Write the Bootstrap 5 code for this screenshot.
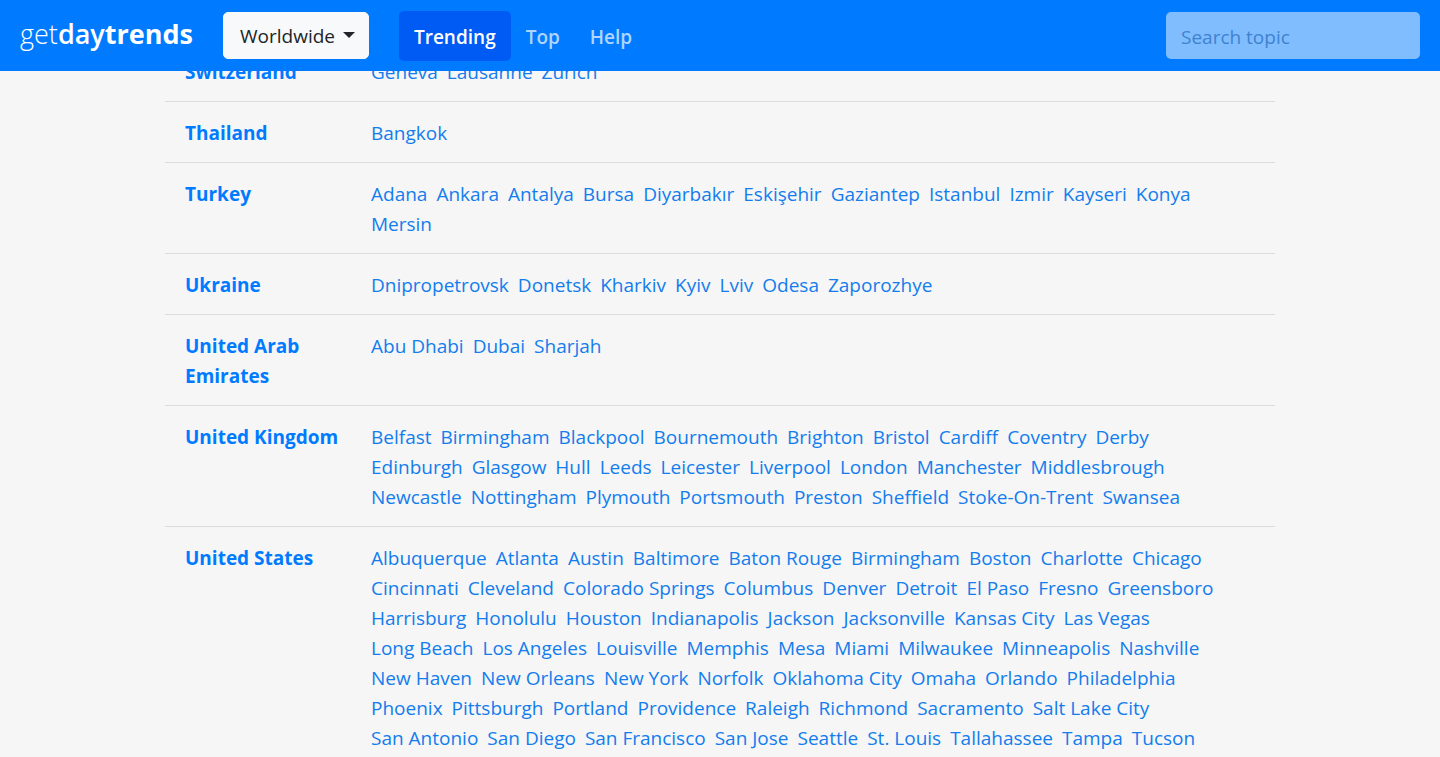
<!DOCTYPE html>
<html lang="en">
<head>
<meta charset="utf-8">
<meta name="viewport" content="width=device-width, initial-scale=1">
<title>getdaytrends</title>
<link href="https://cdn.jsdelivr.net/npm/bootstrap@5.3.0/dist/css/bootstrap.min.css" rel="stylesheet">
<style>
  body { font: 400 19px/30px "Segoe UI", "Open Sans", "Noto Sans", sans-serif; background: #f6f6f6; }
  .topbar { background: #007bff; min-height: 71px; padding: 10px 20px; }
  .topbar .navbar-brand { font-size: 27px; line-height: 44px; padding: 0 0 3px; margin-right: 30px; color: #fff; }
  .brand-thin { font-weight: 300; }
  .brand-mid { font-weight: 600; }
  .brand-strong { font-weight: 700; }
  .region-btn { font-size: 19px; line-height: 30px; height: 47px; padding: 8px 13px 7px 16px; border-color: #f8f9fa; background: #f8f9fa; border-radius: 5px; font-weight: 500; color: #212529; }
  .region-btn::after { margin-left: 8px; border-width: 6px 6px 0; vertical-align: 5px; }
  .region-nav { margin-left: 30px; }
  .topbar .region-nav .nav-link { font-weight: 600; padding: 11px 15px 9px; border-radius: 5px; color: rgba(255,255,255,.7); }
  .topbar .region-nav .nav-link.active { background: #005bf5; color: #fff; }
  .topic-box { width: 254px; height: 47px; font-size: 19px; padding: 8px 15px 5px; border: 0; border-radius: 5px; background: rgba(255,255,255,.5); }
  .topic-box::placeholder { color: #3f82cf; }
  .page-wrap { max-width: 1140px; padding: 40px 15px 0; }
  .places { --bs-table-bg: transparent; --bs-border-color: #dcdcdc; table-layout: fixed; }
  .places > tbody > tr > * { border-width: 1px 0 0; padding: 16px 0 14px 20px; }
  .places > tbody > tr > th { width: 186px; padding-right: 10px; }
  .places > tbody > tr > td { padding-right: 40px; }
  .places a { color: #007bff; text-decoration: none; }
  .places .cities a { color: #137ded; }
  .cities { column-gap: 9px; }
</style>
</head>
<body>
<nav class="navbar navbar-expand fixed-top topbar">
  <a class="navbar-brand" href="#"><span class="brand-thin">get</span><span class="brand-mid">day</span><span class="brand-strong">trends</span></a>
  <button class="btn btn-light dropdown-toggle region-btn" type="button" data-bs-toggle="dropdown">Worldwide</button>
  <ul class="navbar-nav me-auto region-nav">
    <li class="nav-item"><a class="nav-link active" href="#">Trending</a></li>
    <li class="nav-item"><a class="nav-link" href="#">Top</a></li>
    <li class="nav-item"><a class="nav-link" href="#">Help</a></li>
  </ul>
  <form role="search"><input class="form-control topic-box" type="search" placeholder="Search topic" aria-label="Search topic"></form>
</nav>
<main class="container page-wrap">
<table class="table places mb-0">
<tbody>
<tr><th scope="row"><a href="#">Switzerland</a></th><td><div class="d-flex flex-wrap cities"><a href="#">Geneva</a><a href="#">Lausanne</a><a href="#">Zurich</a></div></td></tr>
<tr><th scope="row"><a href="#">Thailand</a></th><td><div class="d-flex flex-wrap cities"><a href="#">Bangkok</a></div></td></tr>
<tr><th scope="row"><a href="#">Turkey</a></th><td><div class="d-flex flex-wrap cities"><a href="#">Adana</a><a href="#">Ankara</a><a href="#">Antalya</a><a href="#">Bursa</a><a href="#">Diyarbakır</a><a href="#">Eskişehir</a><a href="#">Gaziantep</a><a href="#">Istanbul</a><a href="#">Izmir</a><a href="#">Kayseri</a><a href="#">Konya</a><a href="#">Mersin</a></div></td></tr>
<tr><th scope="row"><a href="#">Ukraine</a></th><td><div class="d-flex flex-wrap cities"><a href="#">Dnipropetrovsk</a><a href="#">Donetsk</a><a href="#">Kharkiv</a><a href="#">Kyiv</a><a href="#">Lviv</a><a href="#">Odesa</a><a href="#">Zaporozhye</a></div></td></tr>
<tr><th scope="row"><a href="#">United Arab Emirates</a></th><td><div class="d-flex flex-wrap cities"><a href="#">Abu Dhabi</a><a href="#">Dubai</a><a href="#">Sharjah</a></div></td></tr>
<tr><th scope="row"><a href="#">United Kingdom</a></th><td><div class="d-flex flex-wrap cities"><a href="#">Belfast</a><a href="#">Birmingham</a><a href="#">Blackpool</a><a href="#">Bournemouth</a><a href="#">Brighton</a><a href="#">Bristol</a><a href="#">Cardiff</a><a href="#">Coventry</a><a href="#">Derby</a><a href="#">Edinburgh</a><a href="#">Glasgow</a><a href="#">Hull</a><a href="#">Leeds</a><a href="#">Leicester</a><a href="#">Liverpool</a><a href="#">London</a><a href="#">Manchester</a><a href="#">Middlesbrough</a><a href="#">Newcastle</a><a href="#">Nottingham</a><a href="#">Plymouth</a><a href="#">Portsmouth</a><a href="#">Preston</a><a href="#">Sheffield</a><a href="#">Stoke-On-Trent</a><a href="#">Swansea</a></div></td></tr>
<tr><th scope="row"><a href="#">United States</a></th><td><div class="d-flex flex-wrap cities"><a href="#">Albuquerque</a><a href="#">Atlanta</a><a href="#">Austin</a><a href="#">Baltimore</a><a href="#">Baton Rouge</a><a href="#">Birmingham</a><a href="#">Boston</a><a href="#">Charlotte</a><a href="#">Chicago</a><a href="#">Cincinnati</a><a href="#">Cleveland</a><a href="#">Colorado Springs</a><a href="#">Columbus</a><a href="#">Denver</a><a href="#">Detroit</a><a href="#">El Paso</a><a href="#">Fresno</a><a href="#">Greensboro</a><a href="#">Harrisburg</a><a href="#">Honolulu</a><a href="#">Houston</a><a href="#">Indianapolis</a><a href="#">Jackson</a><a href="#">Jacksonville</a><a href="#">Kansas City</a><a href="#">Las Vegas</a><a href="#">Long Beach</a><a href="#">Los Angeles</a><a href="#">Louisville</a><a href="#">Memphis</a><a href="#">Mesa</a><a href="#">Miami</a><a href="#">Milwaukee</a><a href="#">Minneapolis</a><a href="#">Nashville</a><a href="#">New Haven</a><a href="#">New Orleans</a><a href="#">New York</a><a href="#">Norfolk</a><a href="#">Oklahoma City</a><a href="#">Omaha</a><a href="#">Orlando</a><a href="#">Philadelphia</a><a href="#">Phoenix</a><a href="#">Pittsburgh</a><a href="#">Portland</a><a href="#">Providence</a><a href="#">Raleigh</a><a href="#">Richmond</a><a href="#">Sacramento</a><a href="#">Salt Lake City</a><a href="#">San Antonio</a><a href="#">San Diego</a><a href="#">San Francisco</a><a href="#">San Jose</a><a href="#">Seattle</a><a href="#">St. Louis</a><a href="#">Tallahassee</a><a href="#">Tampa</a><a href="#">Tucson</a></div></td></tr>
</tbody>
</table>
</main>
<script src="https://cdn.jsdelivr.net/npm/bootstrap@5.3.0/dist/js/bootstrap.bundle.min.js"></script>
</body>
</html>
